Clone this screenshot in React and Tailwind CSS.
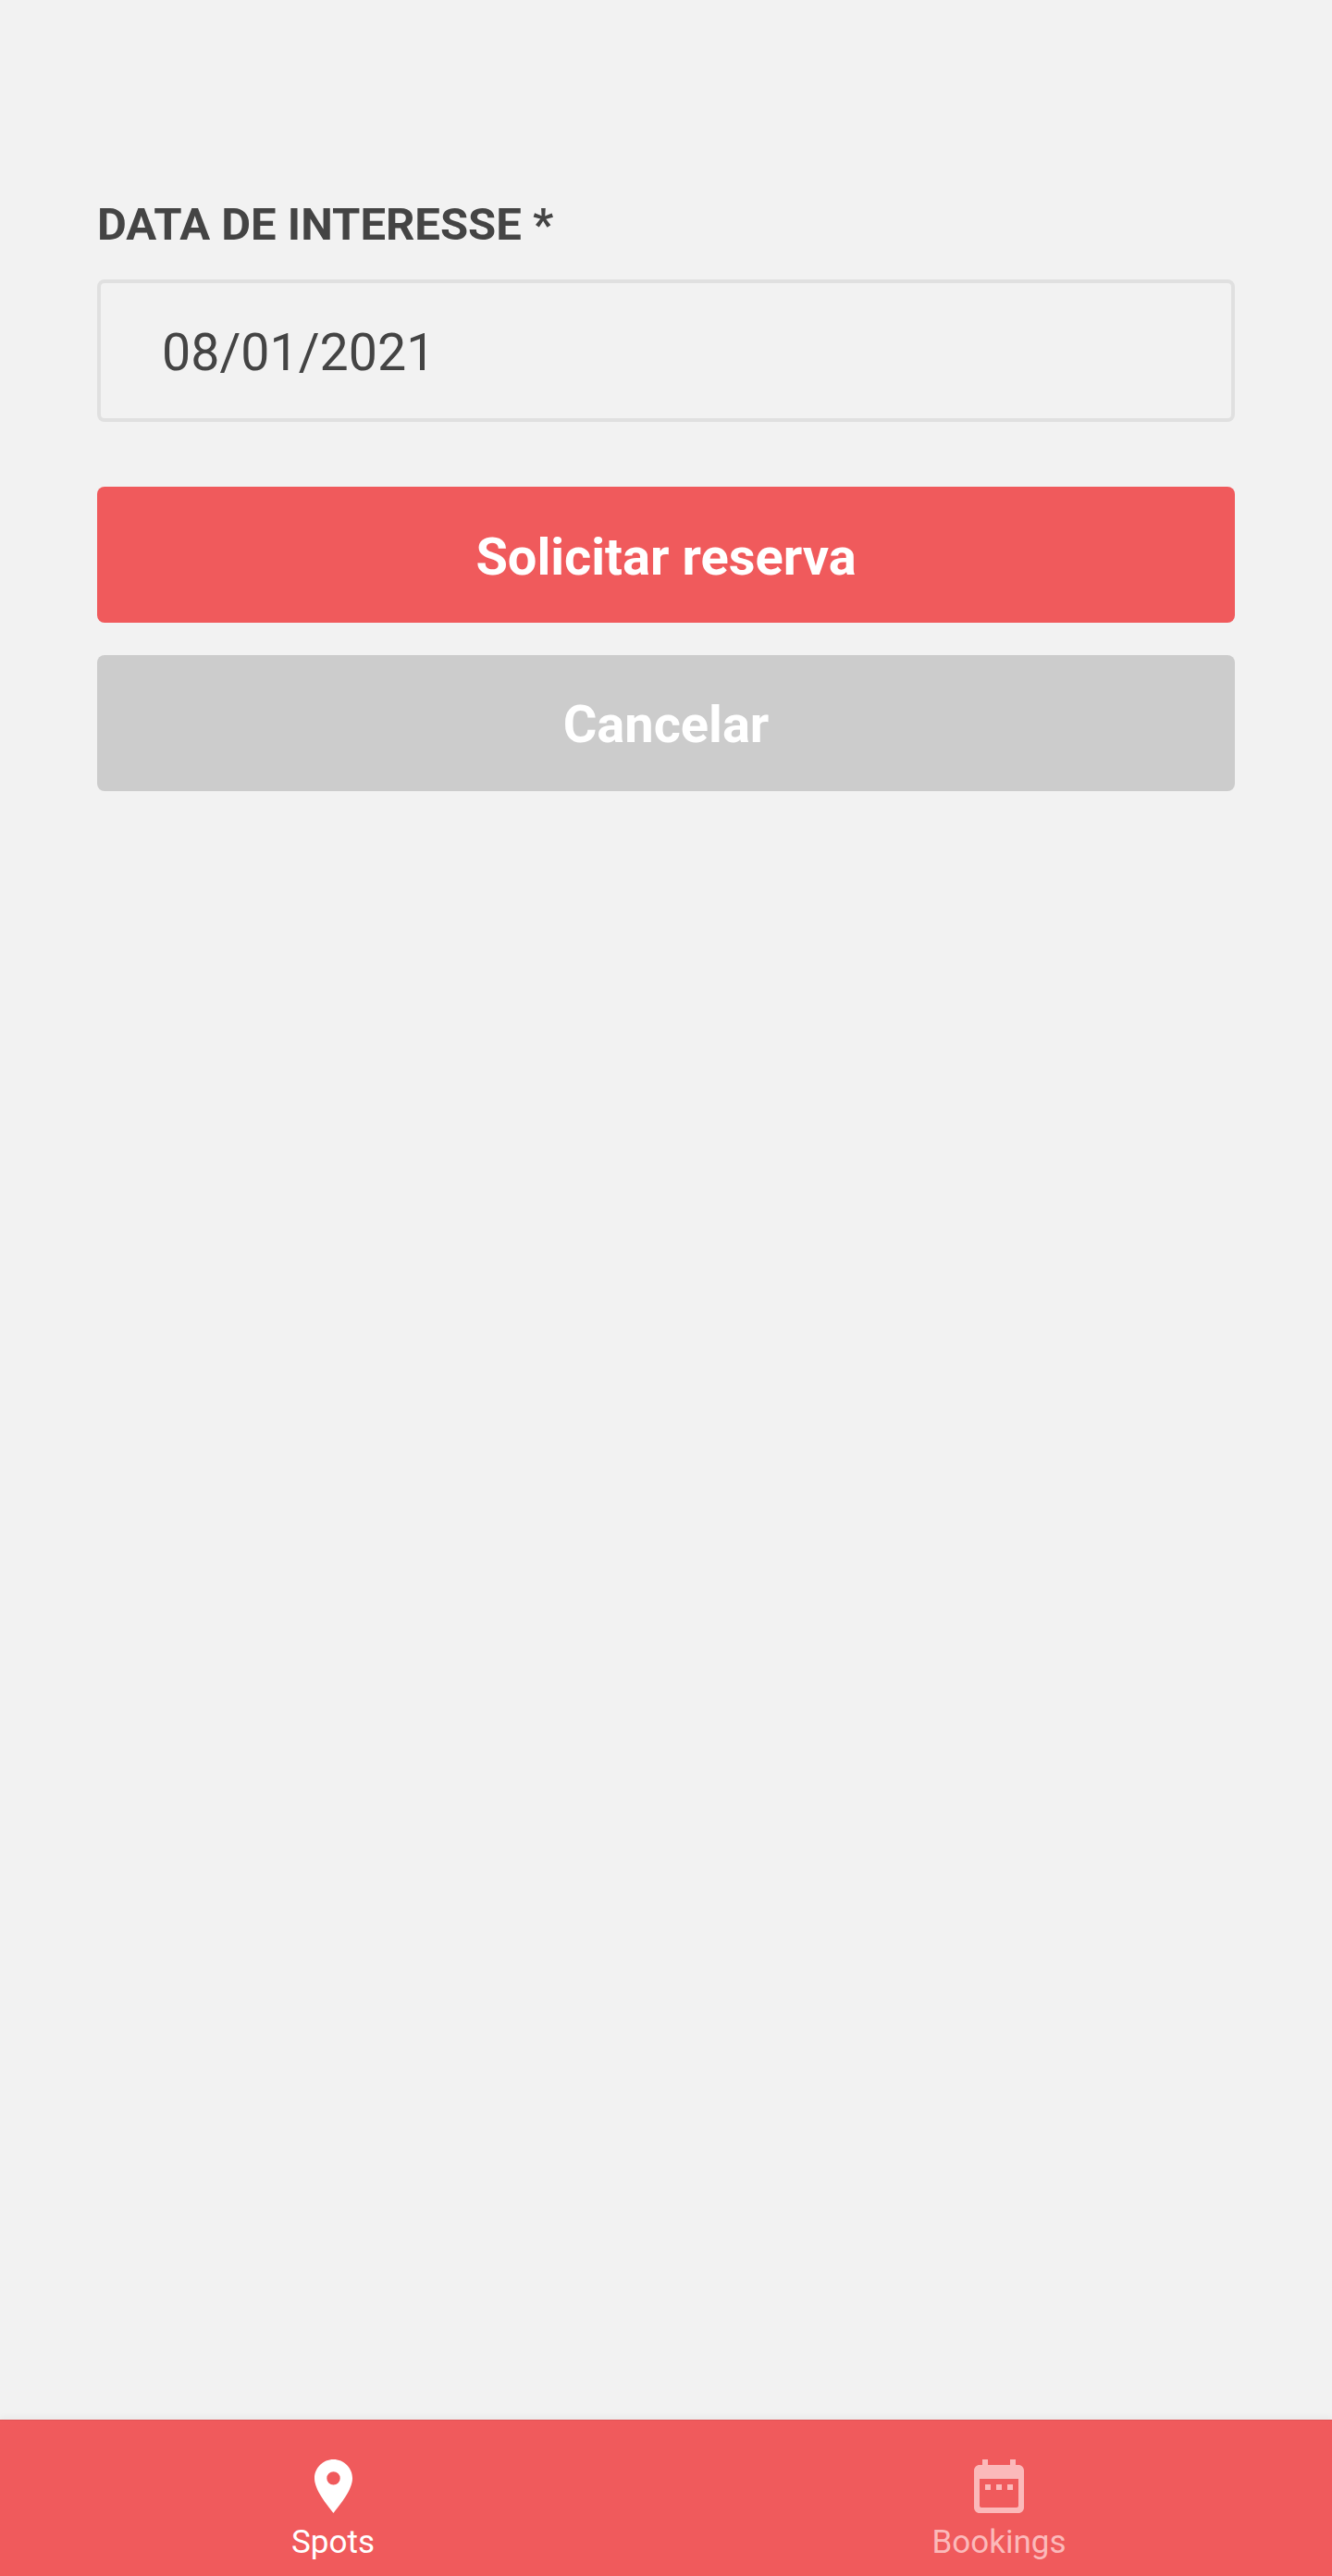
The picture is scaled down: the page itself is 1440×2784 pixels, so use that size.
const PinIcon = () => (
  <svg width="41" height="58" viewBox="0 0 41 58" className="block">
    <path
      fill="currentColor"
      fillRule="evenodd"
      d="M20.5 0C9.2 0 0 9.1 0 20.4 0 33 13.5 48.6 20.5 58 27.5 48.6 41 33 41 20.4 41 9.1 31.8 0 20.5 0ZM20.5 13.2a7.2 7.2 0 1 1 0 14.4 7.2 7.2 0 0 1 0-14.4Z"
    />
  </svg>
);

const CalendarIcon = () => (
  <svg width="54" height="58" viewBox="0 0 54 58" className="block">
    <path
      fill="currentColor"
      fillRule="evenodd"
      d="M9 0H15V6H39V0H45V6H48C51.3 6 54 8.7 54 12V52C54 55.3 51.3 58 48 58H6C2.7 58 0 55.3 0 52V12C0 8.7 2.7 6 6 6H9V0ZM6 21V50C6 51.1 6.9 52 8 52H46C47.1 52 48 51.1 48 50V21H6Z"
    />
    <rect x="12" y="27" width="6" height="6" fill="currentColor" />
    <rect x="24" y="27" width="6" height="6" fill="currentColor" />
    <rect x="36" y="27" width="6" height="6" fill="currentColor" />
  </svg>
);

const App = () => {
  return (
    <div className="flex flex-col h-[2784px] bg-[#f2f2f2] font-['Roboto',sans-serif] overflow-hidden">
      <main className="flex-1 px-[105px] pt-[214px]">
        <label className="block h-[58px] text-[49px] leading-[58px] font-bold text-[#444444]">
          DATA DE INTERESSE *
        </label>
        <div className="flex items-center h-[154px] mt-[30px] pl-[66px] pt-[6px] border-[4px] border-[#e0e0e0] rounded-[8px] text-[55.5px] text-[#444444]">
          08/01/2021
        </div>
        <button className="block w-full h-[147px] mt-[70px] pt-[5px] rounded-[8px] bg-[#f05a5c] text-[56px] font-bold text-white">
          Solicitar reserva
        </button>
        <button className="block w-full h-[147px] mt-[35px] pt-[2px] rounded-[8px] bg-[#cccccc] text-[56px] font-bold text-white">
          Cancelar
        </button>
      </main>

      <nav className="grid grid-cols-2 h-[169px] bg-[#f05a5c] border-t border-[#e25355] shadow-[0_-3px_6px_rgba(0,0,0,0.04)]">
        <div className="flex flex-col items-center pt-[42px] text-white">
          <PinIcon />
          <span className="mt-[10px] text-[35px] leading-[44px]">Spots</span>
        </div>
        <div className="flex flex-col items-center pt-[42px] text-[#fbb9ba]">
          <CalendarIcon />
          <span className="mt-[10px] text-[35px] leading-[44px]">Bookings</span>
        </div>
      </nav>
    </div>
  );
};

export default App;
